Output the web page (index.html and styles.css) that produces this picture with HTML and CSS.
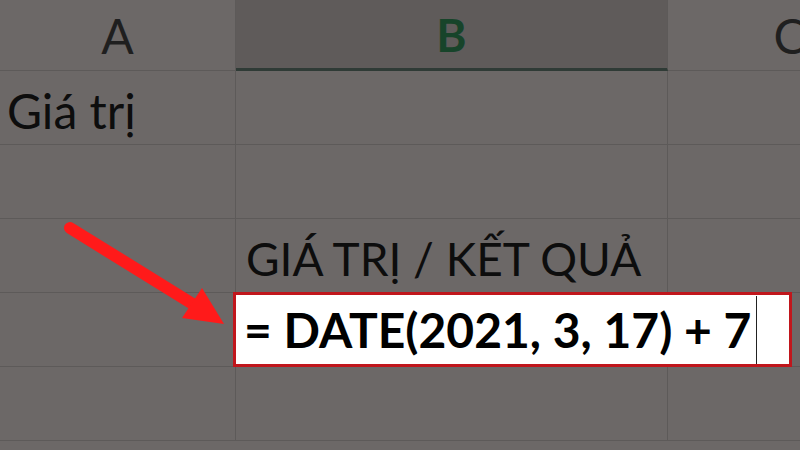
FILE: index.html
```html
<!DOCTYPE html>
<html lang="vi">
<head>
<meta charset="utf-8">
<link rel="stylesheet" href="styles.css">
</head>
<body>
<div class="sheet">
  <div class="cell head">A</div>
  <div class="cell head head-sel">B</div>
  <div class="cell head">C</div>

  <div class="cell text">Giá trị</div>
  <div class="cell"></div>
  <div class="cell"></div>

  <div class="cell"></div>
  <div class="cell"></div>
  <div class="cell"></div>

  <div class="cell"></div>
  <div class="cell text caps">GIÁ TRỊ / KẾT QUẢ</div>
  <div class="cell"></div>

  <div class="cell"></div>
  <div class="cell edit-cell">
    <div class="edit-box">
      <span class="formula">= DATE(2021, 3, 17) + 7</span>
      <span class="caret"></span>
    </div>
  </div>
  <div class="cell"></div>

  <div class="cell"></div>
  <div class="cell"></div>
  <div class="cell"></div>
</div>

<svg class="arrow" width="240" height="340" viewBox="0 0 240 340" aria-hidden="true">
  <line x1="70" y1="228" x2="196" y2="306" stroke="#ff1a1a" stroke-width="12" stroke-linecap="round"/>
  <polygon points="182,318 202,288 224,324" fill="#ff1a1a"/>
</svg>
</body>
</html>
```

FILE: styles.css
```css
html, body {
  margin: 0;
  padding: 0;
}

body {
  width: 800px;
  height: 450px;
  overflow: hidden;
  background: #6c6867;
  font-family: "Lato", "Open Sans", "Liberation Sans", sans-serif;
  color: #0d0d0d;
  position: relative;
}

.sheet {
  display: grid;
  grid-template-columns: 236px 432px 244px;
  grid-template-rows: 71px 74px 74px 74px 74px 74px;
  width: 912px;
}

.cell {
  border-right: 1px solid #5d5a59;
  border-bottom: 1px solid #5d5a59;
  box-sizing: border-box;
  display: flex;
  align-items: flex-end;
  min-width: 0;
}

.head {
  justify-content: center;
  align-items: center;
  font-size: 48px;
  font-weight: 400;
  color: #1f1f1f;
  background: #6c6867;
}

.head-sel {
  background: #5f5b5a;
  color: #17442a;
  font-weight: 700;
  font-size: 46px;
  border-bottom: 3px solid #2f3b36;
}

.text {
  font-size: 48px;
  padding: 0 0 5px 7px;
  white-space: nowrap;
}

.caps {
  font-size: 46px;
  padding-left: 10px;
  padding-bottom: 6px;
}

.edit-cell {
  position: relative;
  z-index: 2;
  align-items: stretch;
  overflow: visible;
}

.edit-box {
  flex-shrink: 0;
  box-sizing: border-box;
  width: 559px;
  margin: -1px 0 -1px -3px;
  border: 3px solid #c0161c;
  background: #ffffff;
  display: flex;
  align-items: center;
  padding-left: 8px;
}

.formula {
  font-size: 48px;
  font-weight: 700;
  color: #000;
  white-space: nowrap;
}

.caret {
  width: 1px;
  height: 68px;
  background: #222;
  margin-left: 5px;
}

.arrow {
  position: absolute;
  left: 0;
  top: 0;
  z-index: 3;
}
```
